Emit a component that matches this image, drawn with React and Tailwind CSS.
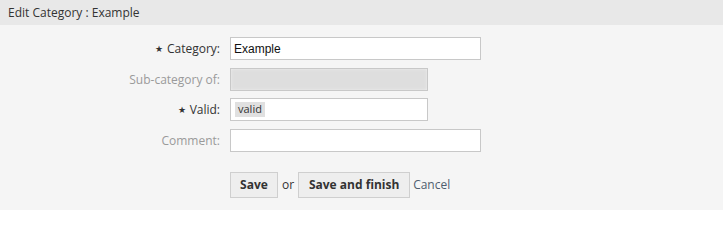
import React from 'react';

function Label({ children, required, muted }) {
    return (
        <label className={`w-[230px] shrink-0 text-right text-[12px] pr-[10px] ${muted ? 'text-[#9a9a9a]' : 'text-[#333]'}`}>
            {required && <span className="text-[9px] mr-[4px] relative top-[-1px]">★</span>}
            {children}
        </label>
    );
}

export default function App() {
    return (
        <div className="w-[723px] h-[210px] bg-[#f5f5f5] font-['Open_Sans',sans-serif]">
            {/* Header */}
            <div className="h-[25px] bg-[#e8e8e8] flex items-center px-[8px]">
                <h2 className="text-[12px] text-[#333]">Edit Category : Example</h2>
            </div>

            <div className="pt-[12px]">
                {/* Category */}
                <div className="flex items-center">
                    <Label required>Category:</Label>
                    <div className="w-[251px] h-[23px] bg-white border border-[#c8c8c8] flex items-center px-[3px] text-[12px] text-[#111] font-['Liberation_Sans',sans-serif]">
                        Example
                    </div>
                </div>

                {/* Sub-category */}
                <div className="flex items-center mt-[8px]">
                    <Label muted>Sub-category of:</Label>
                    <div className="w-[198px] h-[23px] bg-[#dedede] border border-[#c8c8c8] shadow-[inset_0_0_3px_#f0f0f0]"></div>
                </div>

                {/* Valid */}
                <div className="flex items-center mt-[7px]">
                    <Label required>Valid:</Label>
                    <div className="w-[198px] h-[23px] bg-white border border-[#c8c8c8] flex items-center px-[4px]">
                        <span className="bg-[#e0e0e0] px-[3px] h-[15px] flex items-center text-[11px] text-[#333]">valid</span>
                    </div>
                </div>

                {/* Comment */}
                <div className="flex items-center mt-[8px]">
                    <Label muted>Comment:</Label>
                    <div className="w-[251px] h-[23px] bg-white border border-[#c8c8c8]"></div>
                </div>

                {/* Actions */}
                <div className="flex items-center mt-[20px] pl-[230px] text-[12px]">
                    <button className="h-[26px] w-[48px] bg-[#eeeeee] border border-[#cfcfcf] font-bold text-[#333]">Save</button>
                    <span className="mx-[4px] text-[#333]">or</span>
                    <button className="h-[26px] w-[112px] bg-[#eeeeee] border border-[#cfcfcf] font-bold text-[#333]">Save and finish</button>
                    <a href="#" className="ml-[3px] text-[#4f5d6e]">Cancel</a>
                </div>
            </div>
        </div>
    );
}
